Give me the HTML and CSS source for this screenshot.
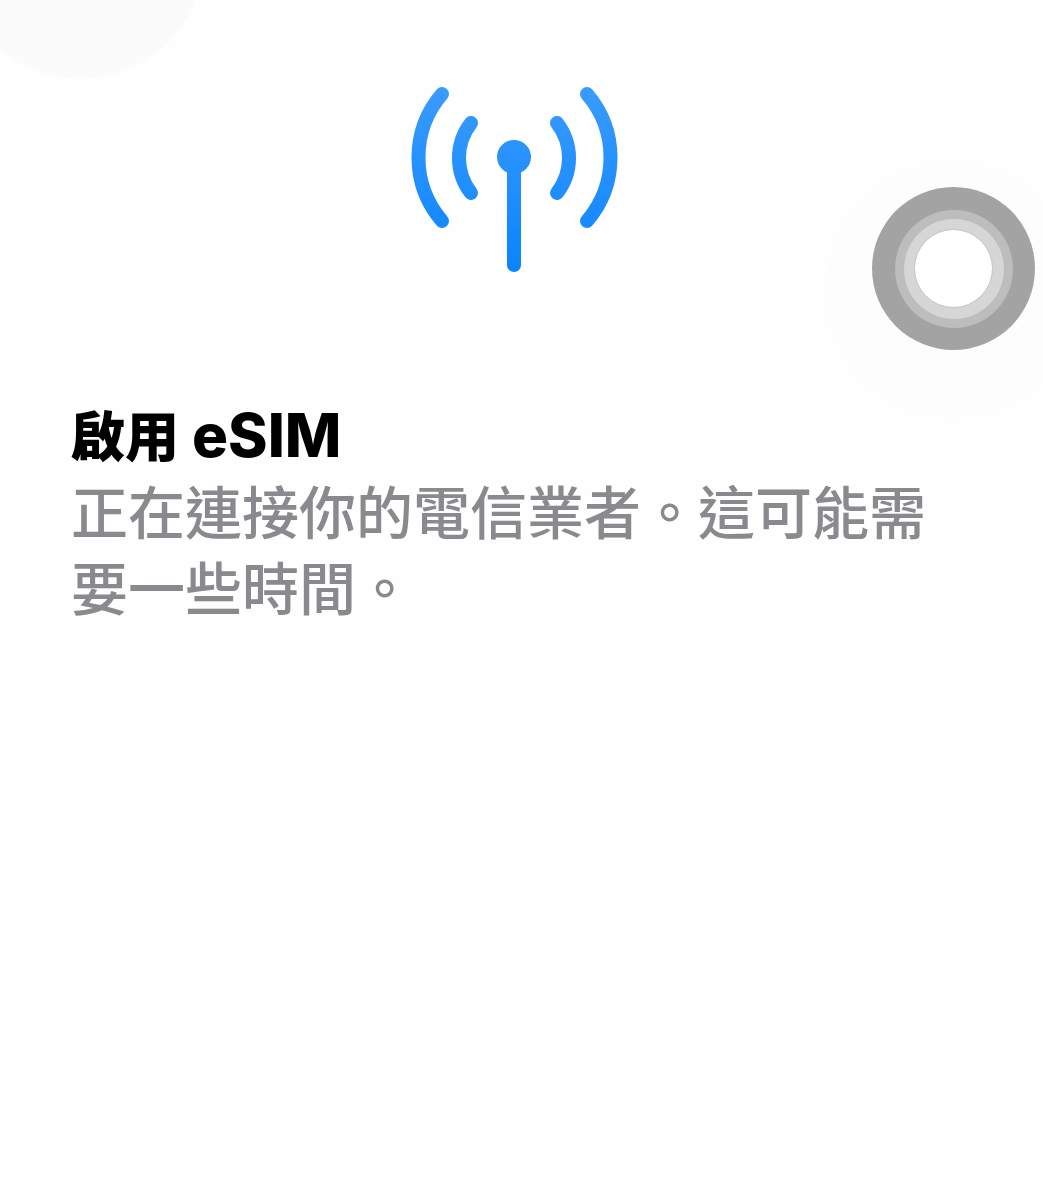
FILE: index.html
```html
<!DOCTYPE html>
<html lang="zh-Hant">
<head>
    <meta charset="UTF-8">
    <meta name="viewport" content="width=device-width, initial-scale=1.0">
    <title>啟用 eSIM</title>
    <link rel="stylesheet" href="styles.css">
</head>
<body>
    <div class="corner-blob"></div>

    <main class="screen">
        <div class="icon-row">
            <svg class="antenna" width="230" height="204" viewBox="0 0 230 204" fill="none" aria-hidden="true">
                <defs>
                    <linearGradient id="antennaBlue" gradientUnits="userSpaceOnUse" x1="0" y1="0" x2="0" y2="200">
                        <stop offset="0" stop-color="#3f9dfb"/>
                        <stop offset="1" stop-color="#0a84ff"/>
                    </linearGradient>
                </defs>
                <g stroke="url(#antennaBlue)" stroke-linecap="round">
                    <path stroke-width="14" d="M42 24A97.5 97.5 0 0 0 42 151"/>
                    <path stroke-width="14" d="M187 24A97.5 97.5 0 0 1 187 151"/>
                    <path stroke-width="14" d="M71 53A57 57 0 0 0 71 123"/>
                    <path stroke-width="14" d="M157 53A57 57 0 0 1 157 123"/>
                    <path stroke-width="14" d="M114 87V195"/>
                </g>
                <circle cx="114" cy="87" r="17" fill="url(#antennaBlue)"/>
            </svg>
        </div>

        <section class="message">
            <h1>啟用<span class="latin">eSIM</span></h1>
            <p>正在連接你的電信業者。這可能需要一些時間。</p>
        </section>
    </main>

    <div class="touch-halo"></div>
    <div class="touch-button">
        <div class="touch-ring">
            <div class="touch-ring-inner">
                <div class="touch-core"></div>
            </div>
        </div>
    </div>
</body>
</html>
```

FILE: styles.css
```css
* {
    margin: 0;
    padding: 0;
    box-sizing: border-box;
}

html, body {
    height: 100%;
}

body {
    position: relative;
    overflow: hidden;
    background-color: #fefefe;
    font-family: Inter, "Noto Sans CJK TC", sans-serif;
}

.corner-blob {
    position: absolute;
    left: -44px;
    top: -169px;
    width: 248px;
    height: 248px;
    border-radius: 50%;
    background-color: #fbfbfb;
}

.screen {
    position: relative;
    padding-top: 70px;
}

.icon-row {
    display: flex;
    justify-content: center;
    padding-right: 14px;
}

.antenna {
    display: block;
}

.message {
    margin-top: 123px;
    padding-left: 71px;
    width: 945px;
}

.message h1 {
    font-size: 54px;
    font-weight: 900;
    line-height: 76px;
    color: #000;
}

.message h1 .latin {
    margin-left: 13px;
    font-size: 60px;
    font-weight: 800;
}

.message p {
    font-size: 57px;
    font-weight: 500;
    line-height: 76px;
    color: #8a8a8e;
}

.touch-halo {
    position: absolute;
    left: 826px;
    top: 163px;
    width: 254px;
    height: 254px;
    border-radius: 50%;
    background-color: #fdfdfd;
}

.touch-button {
    position: absolute;
    left: 872px;
    top: 187px;
    width: 163px;
    height: 163px;
    display: flex;
    align-items: center;
    justify-content: center;
    border-radius: 50%;
    background-color: #a3a3a3;
}

.touch-ring {
    width: 118px;
    height: 118px;
    display: flex;
    align-items: center;
    justify-content: center;
    border-radius: 50%;
    background-color: #bdbdbd;
}

.touch-ring-inner {
    width: 100px;
    height: 100px;
    display: flex;
    align-items: center;
    justify-content: center;
    border-radius: 50%;
    background-color: #d6d6d6;
}

.touch-core {
    width: 79px;
    height: 79px;
    border-radius: 50%;
    background-color: #fff;
    border: 1px solid #c4c4c4;
}
```
